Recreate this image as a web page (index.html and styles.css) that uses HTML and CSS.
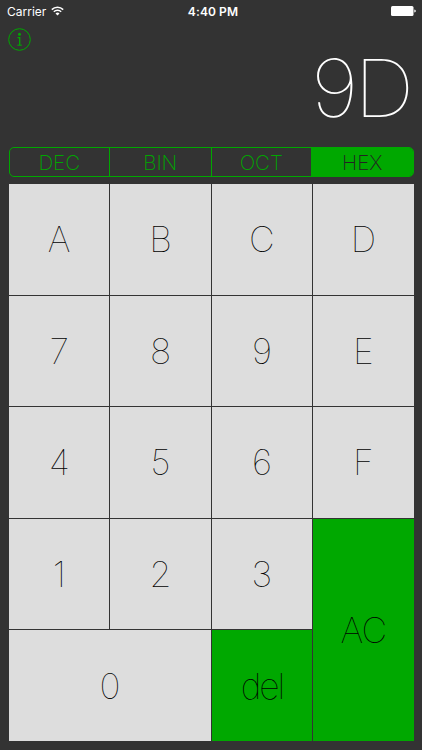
FILE: index.html
```html
<!DOCTYPE html>
<html lang="en">
<head>
<meta charset="utf-8">
<title>Calculator</title>
<link rel="stylesheet" href="styles.css">
</head>
<body>
<header class="status">
  <div class="carrier"><span>Carrier</span>
    <svg class="wifi" width="13" height="10" viewBox="0 0 13 10" fill="none" stroke="#fff" stroke-width="1.5"><path d="M.8 3.6a8.2 8.2 0 0 1 11.4 0M2.8 5.8a5.3 5.3 0 0 1 7.4 0"/><path d="M4.5 7.5a3 3 0 0 1 4 0l-2 2z" fill="#fff" stroke="none"/></svg>
  </div>
  <div class="time">4:40 PM</div>
  <svg class="battery" width="25" height="10" viewBox="0 0 25 10" fill="#fff"><rect width="22.5" height="10" rx="1.5"/><path d="M23.3 3.4q1.5.2 1.5 1.6t-1.5 1.6z"/></svg>
</header>
<div class="info">
  <svg width="23" height="23" viewBox="0 0 23 23" fill="none" stroke="#00a800"><circle cx="11.5" cy="11.5" r="10.8" stroke-width="1"/><circle cx="11.5" cy="6.2" r="1.5" fill="#00a800" stroke="none"/><path d="M9.5 9.7h2.2v7.6" stroke-width="1.3"/><path d="M9.3 17.2h4.6" stroke-width="1"/></svg>
</div>
<output class="display"><span class="nine">9</span><span class="dee">D</span></output>
<nav class="bases"><button>DEC</button><button>BIN</button><button>OCT</button><button class="on">HEX</button></nav>
<main class="keys">
  <button>A</button><button>B</button><button>C</button><button>D</button>
  <button>7</button><button>8</button><button>9</button><button>E</button>
  <button>4</button><button>5</button><button>6</button><button>F</button>
  <button>1</button><button>2</button><button>3</button><button class="green ac">AC</button>
  <button class="zero">0</button><button class="green del">del</button>
</main>
</body>
</html>
```
FILE: styles.css
```css
* { box-sizing: border-box; }
body {
  margin: 0;
  width: 422px;
  height: 750px;
  overflow: hidden;
  background: #333;
  color: #fff;
  font-family: Inter, "Liberation Sans", sans-serif;
}
button {
  margin: 0;
  padding: 0;
  border: 0;
  background: none;
  font: inherit;
  color: inherit;
}
.status {
  display: grid;
  grid-template-columns: 1fr auto 1fr;
  align-items: center;
  height: 22px;
  padding: 0 6px 0 7px;
  font-size: 12px;
}
.carrier { display: flex; align-items: center; gap: 5px; }
.time { padding-left: 3px; font-weight: 600; letter-spacing: 0.1px; }
.battery { justify-self: end; }
.info { height: 23px; margin: 6px 0 0 8px; }
.info svg { display: block; }
.display {
  display: flex;
  justify-content: flex-end;
  height: 96px;
  padding-right: 12px;
  font-size: 80px;
  line-height: 74px;
  font-weight: 100;
  letter-spacing: -4px;
  transform: scaleX(1.05);
  transform-origin: 409px 0;
}
.bases {
  display: grid;
  grid-template-columns: 99.5px 101.5px 100.5px 1fr;
  width: 405px;
  height: 29.5px;
  margin: 0 0 7.5px 8.5px;
  border: 1px solid #00a800;
  border-radius: 5px;
  overflow: hidden;
  color: #00a800;
  font-size: 20.5px;
  font-weight: 200;
  letter-spacing: -1.2px;
}
.bases button { padding-top: 1px; }
.bases button + button { border-left: 1px solid #00a800; }
.bases .on { background: #00a800; color: #222; }
.keys {
  display: grid;
  grid-template-columns: repeat(4, 1fr);
  grid-template-rows: repeat(5, 1fr);
  gap: 1px;
  width: 404.5px;
  height: 557px;
  margin-left: 9px;
  color: #000;
  font-size: 35.5px;
  font-weight: 100;
}
.keys button { background: #ddd; padding-top: 1px; }
.keys .green { background: #00a800; letter-spacing: -1px; }
.keys .del { letter-spacing: -2px; }
.keys .ac { grid-row: 4 / 6; grid-column: 4; }
.keys .zero { grid-column: 1 / 3; }
```
